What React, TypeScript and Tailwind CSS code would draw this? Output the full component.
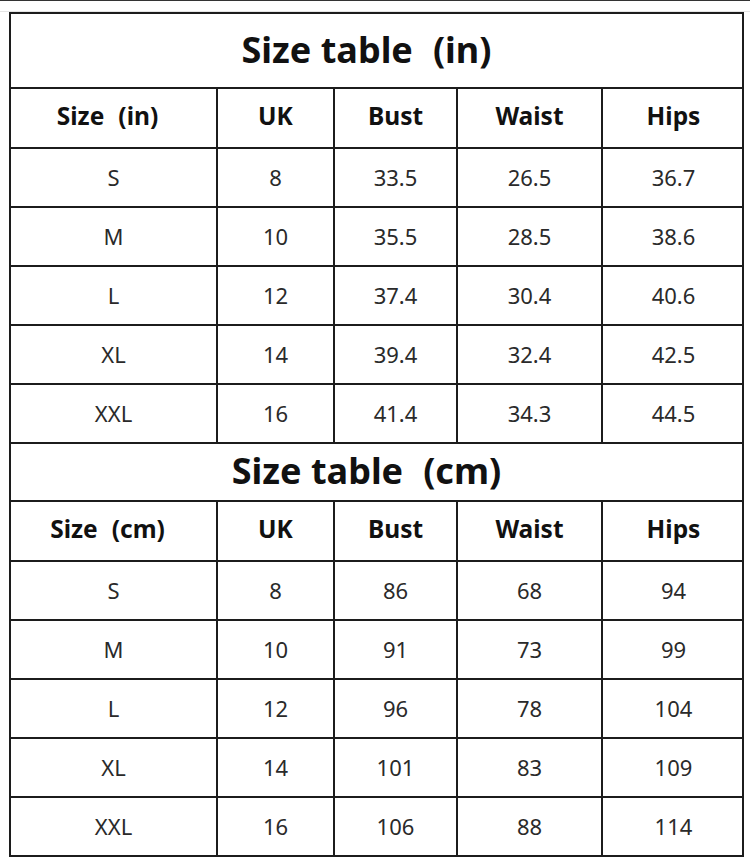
import React from "react";

const widths = ["w-[207px]", "w-[117px]", "w-[123px]", "w-[145px]", "w-[141px]"];

const inRows = [
  ["S", "8", "33.5", "26.5", "36.7"],
  ["M", "10", "35.5", "28.5", "38.6"],
  ["L", "12", "37.4", "30.4", "40.6"],
  ["XL", "14", "39.4", "32.4", "42.5"],
  ["XXL", "16", "41.4", "34.3", "44.5"],
];
const cmRows = [
  ["S", "8", "86", "68", "94"],
  ["M", "10", "91", "73", "99"],
  ["L", "12", "96", "78", "104"],
  ["XL", "14", "101", "83", "109"],
  ["XXL", "16", "106", "88", "114"],
];

function Row({ cells, bold, h }: { cells: React.ReactNode[]; bold?: boolean; h: string }) {
  return (
    <div className={`flex ${h} border-b-2 border-[#1c1c1c] box-border`}>
      {cells.map((c, i) => (
        <div
          key={i}
          className={`${widths[i]} shrink-0 flex items-center justify-center box-border whitespace-pre ${
            i < 4 ? "border-r-2 border-[#1c1c1c]" : ""
          } ${i === 0 && bold ? "pr-[12px]" : ""} ${
            bold ? "font-bold text-[24.5px] text-[#111] pb-[3px]" : "text-[22px] text-[#2a2a2a]"
          }`}
        >
          {c}
        </div>
      ))}
    </div>
  );
}

function Section({ unit, rows, titleH }: { unit: string; rows: string[][]; titleH: string }) {
  return (
    <>
      <div
        className={`${titleH} flex items-center justify-center border-b-2 border-[#1c1c1c] box-border text-[36px] font-bold text-[#111] pb-[2px] pr-[20px]`}
      >
        <span>Size table</span>
        <span className="ml-[20px]">({unit})</span>
      </div>
      <Row
        cells={[
          <>
            <span>Size</span>
            <span className="ml-[14px]">({unit})</span>
          </>,
          "UK",
          "Bust",
          "Waist",
          "Hips",
        ]}
        bold
        h="h-[60px]"
      />
      {rows.map((r, i) => (
        <Row key={i} cells={r} h="h-[59px]" />
      ))}
    </>
  );
}

export default function App() {
  return (
    <div
      className="w-[750px] h-[864px] bg-white relative overflow-hidden"
      style={{ fontFamily: '"Noto Sans", "Noto Sans CJK SC", sans-serif' }}
    >
      <div className="h-px bg-[#333]" />
      <div className="h-[11px] bg-white border-b border-[#e4e4e4]" />
      <div className="pl-[9px]">
        <div className="w-[735px] border-l-2 border-t-2 border-r-2 border-[#1c1c1c] box-border">
          <Section unit="in" rows={inRows} titleH="h-[75px]" />
          <Section unit="cm" rows={cmRows} titleH="h-[58px]" />
        </div>
      </div>
    </div>
  );
}
